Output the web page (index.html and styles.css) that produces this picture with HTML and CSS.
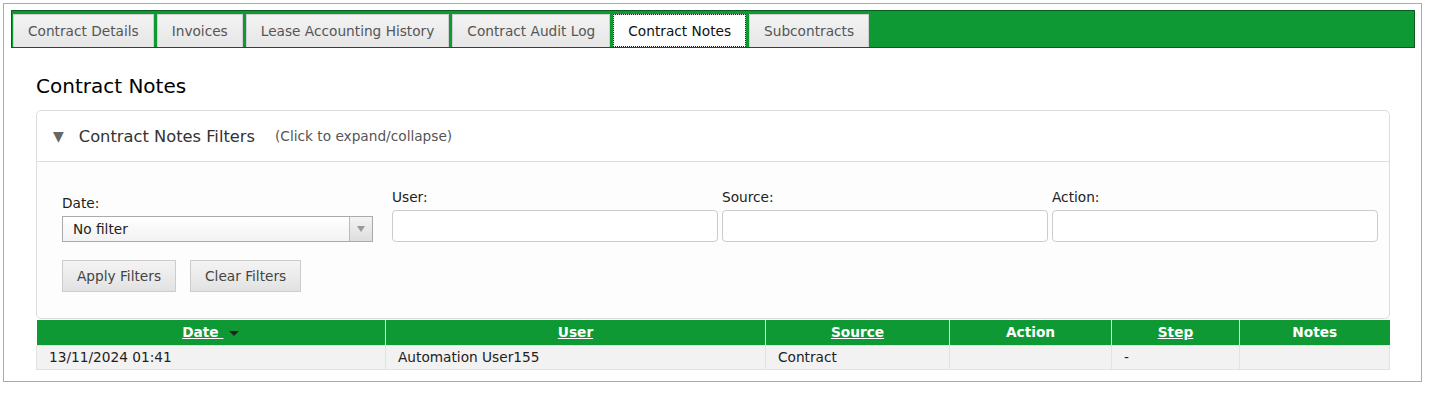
FILE: index.html
```html
<!DOCTYPE html>
<html lang="en">
<head>
    <meta charset="UTF-8">
    <title>Contract Notes</title>
    <link rel="stylesheet" href="styles.css">
</head>
<body>

<div class="frame">
    <!--tab strip-->
    <ul class="tabs">
        <li class="tab">Contract Details</li>
        <li class="tab">Invoices</li>
        <li class="tab">Lease Accounting History</li>
        <li class="tab">Contract Audit Log</li>
        <li class="tab tab-active">Contract Notes</li>
        <li class="tab">Subcontracts</li>
    </ul>

    <div class="content">
        <h2 class="page-title">Contract Notes</h2>

        <!--filter panel-->
        <div class="filters">
            <div class="filters-head">
                <span class="filters-toggle">&#9660;</span>
                <span class="filters-title">Contract Notes Filters</span>
                <span class="filters-hint">(Click to expand/collapse)</span>
            </div>
            <div class="filters-body">
                <div class="filters-row">
                    <div class="field field-date">
                        <label class="field-label">Date:</label>
                        <div class="select">
                            <span class="select-text">No filter</span>
                            <span class="select-arrow"><i></i></span>
                        </div>
                    </div>
                    <div class="field">
                        <label class="field-label">User:</label>
                        <input class="text-input" type="text">
                    </div>
                    <div class="field">
                        <label class="field-label">Source:</label>
                        <input class="text-input" type="text">
                    </div>
                    <div class="field">
                        <label class="field-label">Action:</label>
                        <input class="text-input" type="text">
                    </div>
                </div>
                <div class="filters-buttons">
                    <button class="btn">Apply Filters</button>
                    <button class="btn">Clear Filters</button>
                </div>
            </div>
        </div>

        <!--notes grid-->
        <table class="grid">
            <colgroup>
                <col style="width: 349px">
                <col style="width: 380px">
                <col style="width: 184px">
                <col style="width: 162px">
                <col style="width: 128px">
                <col>
            </colgroup>
            <thead>
            <tr>
                <th><a href="#">Date&nbsp;</a><span class="sort-arrow"></span></th>
                <th><a href="#">User</a></th>
                <th><a href="#">Source</a></th>
                <th>Action</th>
                <th><a href="#">Step</a></th>
                <th>Notes</th>
            </tr>
            </thead>
            <tbody>
            <tr>
                <td>13/11/2024 01:41</td>
                <td>Automation User155</td>
                <td>Contract</td>
                <td></td>
                <td>-</td>
                <td></td>
            </tr>
            </tbody>
        </table>
    </div>
</div>

</body>
</html>
```

FILE: styles.css
```css
* {
    margin: 0;
    padding: 0;
    box-sizing: border-box;
}

body {
    background-color: #fff;
    font-family: "DejaVu Sans", Verdana, sans-serif;
    font-size: 13.7px;
    color: #222;
}

/*outer frame*/
.frame {
    margin: 3px 11px 0 3px;
    border: 1px solid #aaa;
    padding: 6px 6px 11px 7px;
}

/*tab strip*/
.tabs {
    display: flex;
    gap: 3px;
    list-style: none;
    height: 38px;
    padding: 3px 0 0 1px;
    background-color: #0e9934;
    border: 1px solid #0b5a20;
}

.tab {
    height: 33px;
    padding: 0 14px;
    line-height: 32px;
    color: #555;
    background: linear-gradient(#f3f3f3, #e6e6e6);
    border: 1px solid #cfcfcf;
    border-bottom: none;
}

.tab-active {
    background: #fff;
    color: #111;
    padding: 0 14px;
    outline: 1px dotted #222;
    outline-offset: -1px;
}

.content {
    padding: 0 25px;
}

.page-title {
    margin: 26px 0 12px;
    font-size: 20px;
    font-weight: normal;
    line-height: 24px;
    color: #000;
}

/*filter panel*/
.filters {
    border: 1px solid #ddd;
    border-radius: 5px;
    background-color: #fdfdfd;
}

.filters-head {
    display: flex;
    align-items: center;
    height: 51px;
    padding-left: 16px;
    background-color: #fff;
    border-bottom: 1px solid #ddd;
    border-radius: 5px 5px 0 0;
}

.filters-toggle {
    font-size: 14px;
    color: #666;
    margin-right: 15px;
}

.filters-title {
    font-size: 16.3px;
    color: #333;
    margin-right: 20px;
}

.filters-hint {
    font-size: 13.7px;
    color: #555;
}

.filters-body {
    padding: 27px 0 26px 25px;
}

.filters-row {
    display: flex;
    align-items: flex-end;
}

.field {
    width: 326px;
    margin-left: 4px;
}

.field-date {
    width: 311px;
    margin-left: 0;
    margin-right: 15px;
}

.field-label {
    display: block;
    line-height: 16px;
    margin-bottom: 5px;
    color: #222;
}

.text-input {
    display: block;
    width: 100%;
    height: 32px;
    border: 1px solid #ccc;
    border-radius: 4px;
    background: #fff;
}

.select {
    display: flex;
    height: 26px;
    border: 1px solid #aaa;
    background: linear-gradient(#fff, #f2f2f2);
}

.select-text {
    flex: 1;
    padding-left: 10px;
    line-height: 24px;
    color: #222;
}

.select-arrow {
    width: 23px;
    display: flex;
    align-items: center;
    justify-content: center;
    border-left: 1px solid #bbb;
    background: linear-gradient(#f3f3f3, #dedede);
}

.select-arrow i {
    width: 0;
    height: 0;
    border-left: 4px solid transparent;
    border-right: 4px solid transparent;
    border-top: 6px solid #999;
}

.filters-buttons {
    display: flex;
    gap: 14px;
    margin-top: 18px;
}

.btn {
    height: 32px;
    padding: 0 14px;
    font-family: inherit;
    font-size: 13.7px;
    color: #444;
    background: linear-gradient(#f4f4f4, #e2e2e2);
    border: 1px solid #ccc;
}

/*notes grid*/
.grid {
    width: 100%;
    margin-top: 1px;
    border-collapse: collapse;
    table-layout: fixed;
}

.grid th {
    height: 25px;
    background-color: #0e9934;
    color: #fff;
    font-weight: bold;
    text-align: center;
    border-left: 1px solid #e2e2e2;
    border-right: 1px solid #e2e2e2;
}

.grid th:first-child {
    border-left: none;
}

.grid th:last-child {
    border-right: none;
}

.grid th a {
    color: #fff;
}

.sort-arrow {
    display: inline-block;
    margin-left: 6px;
    vertical-align: middle;
    border-left: 5px solid transparent;
    border-right: 5px solid transparent;
    border-top: 5px solid #222;
}

.grid td {
    height: 24px;
    padding: 0 12px;
    background-color: #f2f2f2;
    border: 1px solid #e2e2e2;
    color: #222;
}
```
